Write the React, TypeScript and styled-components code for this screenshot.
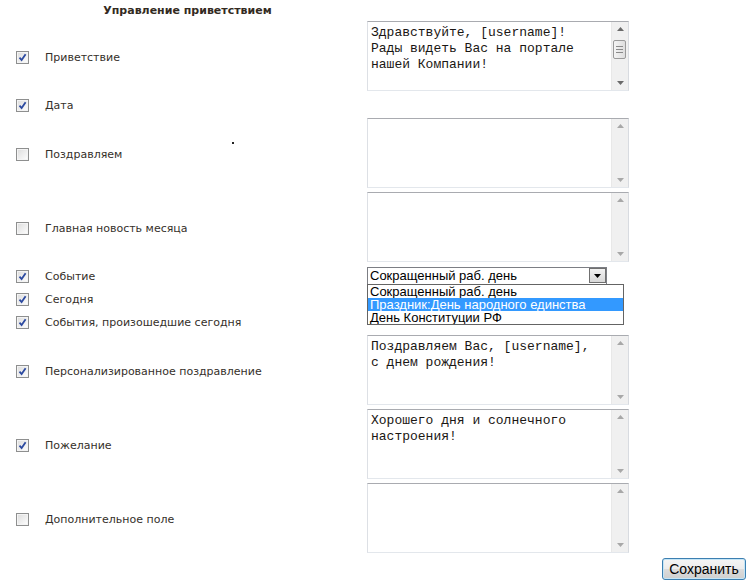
import { createGlobalStyle, styled } from "styled-components";

const GlobalStyle = createGlobalStyle`
    html, body {
        margin: 0;
        padding: 0;
        background: #fff;
    }
    body {
        font-family: "DejaVu Sans", Verdana, sans-serif;
        font-size: 11px;
        color: #333;
    }
`;

const Page = styled.div`
    width: 752px;
    height: 585px;
    box-sizing: border-box;
    padding: 0 6px 0 8px;
    position: relative;
`;

const Form = styled.div`
    display: flex;
    flex-direction: column;
`;

const Header = styled.div`
    display: grid;
    grid-template-columns: 359px 262px;
    height: 19px;
    .title {
        padding-top: 4px;
        line-height: 14px;
        font-weight: bold;
        text-align: center;
        color: #332a22;
    }
`;

const Row = styled.div<{ $tall?: boolean }>`
    display: grid;
    grid-template-columns: 37px 322px 262px;
    align-items: center;
    height: ${(p) => (p.$tall ? "74px" : "23px")};
    position: relative;
`;

const Label = styled.span`
    padding-top: 3px;
    line-height: 14px;
    color: #35302a;
`;

const CheckCell = styled.span`
    padding: 2px 0 0 8px;
    display: flex;
    align-items: center;
`;

const Box = styled.span`
    width: 13px;
    height: 13px;
    box-sizing: border-box;
    border: 1px solid #8e8f8f;
    background: linear-gradient(135deg, #dcdcdc 0%, #f4f4f4 70%, #fff 100%);
    box-shadow: inset 0 0 0 1px #f4f4f4;
    display: flex;
    align-items: center;
    justify-content: center;
`;

const Checkbox = ({ checked }: { checked?: boolean }) => (
    <CheckCell>
        <Box>
            {checked && (
                <svg width="9" height="9" viewBox="0 0 9 9">
                    <path d="M1.5 4.6 L3.6 7 L7.6 1.2" fill="none" stroke="#2c4aa0" strokeWidth="1.8" />
                </svg>
            )}
        </Box>
    </CheckCell>
);

const Field = styled.div`
    width: 262px;
    height: 70px;
    box-sizing: border-box;
    border: 1px solid;
    border-color: #a9abb0 #d8dbe0 #e3e7ec #dde0e5;
    display: flex;
    background: #fff;
`;

const Text = styled.textarea`
    flex: 1;
    border: none;
    outline: none;
    resize: none;
    overflow: hidden;
    margin: 0;
    padding: 3px 0 0 3px;
    font-family: "Liberation Mono", "Courier New", monospace;
    font-size: 13px;
    line-height: 16px;
    color: #1a1613;
    background: transparent;
`;

const Rail = styled.div`
    width: 16px;
    background: #f0f0f0;
    border-left: 1px solid #e8e8e8;
    display: flex;
    flex-direction: column;
    align-items: center;
    justify-content: space-between;
    padding: 5px 0 5px;
    position: relative;
`;

const Thumb = styled.div`
    position: absolute;
    left: 1px;
    top: 18px;
    width: 11px;
    height: 17px;
    border: 1px solid #9a9a9a;
    border-radius: 2px;
    background: linear-gradient(90deg, #f4f4f4, #dedede);
    display: flex;
    flex-direction: column;
    align-items: center;
    justify-content: center;
    gap: 2px;
    span {
        width: 7px;
        height: 1px;
        background: #8a8a8a;
    }
`;

const Arrow = ({ up, on }: { up?: boolean; on?: boolean }) => (
    <svg width="7" height="4" viewBox="0 0 7 4">
        <path d={up ? "M0 4 L3.5 0 L7 4 Z" : "M0 0 L3.5 4 L7 0 Z"} fill={on ? "#6a6a6a" : "#a8a8a8"} />
    </svg>
);

const TextBox = ({ value, scroll }: { value?: string; scroll?: boolean }) => (
    <Field>
        <Text defaultValue={value} readOnly />
        <Rail>
            <Arrow up on={scroll} />
            {scroll && (
                <Thumb>
                    <span />
                    <span />
                    <span />
                </Thumb>
            )}
            <Arrow on={scroll} />
        </Rail>
    </Field>
);

const SelectWrap = styled.div`
    position: relative;
    width: 240px;
`;

const SelectBox = styled.div`
    height: 18px;
    box-sizing: border-box;
    border: 1px solid #7c7e84;
    display: flex;
    align-items: center;
    font-family: "Liberation Sans", Arial, sans-serif;
    font-size: 13px;
    color: #000;
    background: #fff;
    .value {
        flex: 1;
        padding-left: 2px;
        line-height: 16px;
    }
`;

const DropButton = styled.span`
    width: 17px;
    height: 15px;
    margin-right: 0;
    box-sizing: border-box;
    border: 1px solid #707070;
    background: linear-gradient(#f2f2f2, #d8d8d8);
    display: flex;
    align-items: center;
    justify-content: center;
`;

const Menu = styled.ul`
    position: absolute;
    top: 17px;
    left: 0;
    width: 257px;
    margin: 0;
    padding: 0;
    list-style: none;
    box-sizing: border-box;
    border: 1px solid #646464;
    background: #fff;
    font-family: "Liberation Sans", Arial, sans-serif;
    font-size: 13px;
    color: #000;
    z-index: 2;
`;

const Option = styled.li<{ $active?: boolean }>`
    height: 13px;
    line-height: 13px;
    padding-left: 2px;
    white-space: nowrap;
    overflow: hidden;
    background: ${(p) => (p.$active ? "#3399ff" : "transparent")};
    color: ${(p) => (p.$active ? "#fff" : "#000")};
`;

const Footer = styled.div`
    display: flex;
    justify-content: flex-end;
    padding-top: 3px;
`;

const SaveButton = styled.button`
    width: 84px;
    height: 22px;
    border: 1px solid #3c7fb1;
    border-radius: 3px;
    background: linear-gradient(#f5f5f5 0%, #ececec 48%, #dcdcdc 52%, #cfcfcf 100%);
    box-shadow: inset 0 0 0 1px #c4e5f6;
    font-family: "Liberation Sans", Arial, sans-serif;
    font-size: 14px;
    color: #000;
    padding: 0;
`;

const Dot = styled.span`
    position: absolute;
    left: 232px;
    top: 142px;
    width: 2px;
    height: 2px;
    background: #222;
`;

const options = ["Сокращенный раб. день", "Праздник:День народного единства", "День Конституции РФ"];

export default function App() {
    return (
        <>
            <GlobalStyle />
            <Page>
                <Form>
                    <Header>
                        <div className="title">Управление приветствием</div>
                    </Header>
                    <Row $tall>
                        <Checkbox checked />
                        <Label>Приветствие</Label>
                        <TextBox scroll value={"Здравствуйте, [username]!\nРады видеть Вас на портале нашей Компании!"} />
                    </Row>
                    <Row>
                        <Checkbox checked />
                        <Label>Дата</Label>
                        <span />
                    </Row>
                    <Row $tall>
                        <Checkbox />
                        <Label>Поздравляем</Label>
                        <TextBox />
                    </Row>
                    <Row $tall>
                        <Checkbox />
                        <Label>Главная новость месяца</Label>
                        <TextBox />
                    </Row>
                    <Row>
                        <Checkbox checked />
                        <Label>Событие</Label>
                        <SelectWrap>
                            <SelectBox>
                                <span className="value">{options[0]}</span>
                                <DropButton>
                                    <svg width="7" height="4" viewBox="0 0 7 4">
                                        <path d="M0 0 L3.5 4 L7 0 Z" fill="#000" />
                                    </svg>
                                </DropButton>
                            </SelectBox>
                            <Menu>
                                {options.map((o, i) => (
                                    <Option key={o} $active={i === 1}>
                                        {o}
                                    </Option>
                                ))}
                            </Menu>
                        </SelectWrap>
                    </Row>
                    <Row>
                        <Checkbox checked />
                        <Label>Сегодня</Label>
                        <span />
                    </Row>
                    <Row>
                        <Checkbox checked />
                        <Label>События, произошедшие сегодня</Label>
                        <span />
                    </Row>
                    <Row $tall>
                        <Checkbox checked />
                        <Label>Персонализированное поздравление</Label>
                        <TextBox value={"Поздравляем Вас, [username],\nс днем рождения!"} />
                    </Row>
                    <Row $tall>
                        <Checkbox checked />
                        <Label>Пожелание</Label>
                        <TextBox value={"Хорошего дня и солнечного настроения!"} />
                    </Row>
                    <Row $tall>
                        <Checkbox />
                        <Label>Дополнительное поле</Label>
                        <TextBox />
                    </Row>
                    <Footer>
                        <SaveButton>Сохранить</SaveButton>
                    </Footer>
                </Form>
                <Dot />
            </Page>
        </>
    );
}
